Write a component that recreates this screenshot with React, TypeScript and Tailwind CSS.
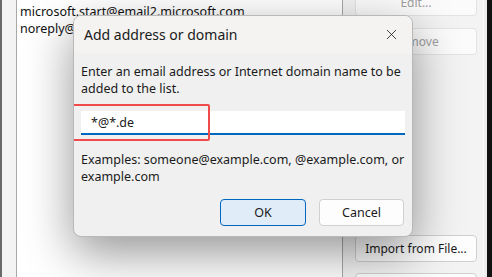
import { X } from 'lucide-react';

const font = { fontFamily: '"Noto Sans", "Liberation Sans", sans-serif' };

function SideButton({ label, disabled }: { label: string; disabled?: boolean }) {
  return (
    <div
      className={`flex h-[27px] shrink-0 items-center justify-center rounded-[4px] border text-[12px] ${
        disabled
          ? 'border-[#e3e3e3] bg-[#fbfbfb] text-[#a0a0a0]'
          : 'border-[#d0d0d0] bg-[#fdfdfd] text-[#1a1a1a]'
      }`}
    >
      {label}
    </div>
  );
}

export default function App() {
  return (
    <div
      className="relative h-[277px] w-[492px] overflow-hidden bg-[#f3f3f3]"
      style={font}
    >
      <div className="flex h-full">
        <div className="w-[16px] border-l-2 border-[#6a6a6a] bg-[#f3f3f3]" />
        <div className="w-[327px] border-x border-[#a8a8a8] bg-white px-[3px] pt-[3px] text-[12.5px] leading-[17px] text-[#111]">
          <div>microsoft.start@email2.microsoft.com</div>
          <div>noreply@microsoft.com</div>
        </div>
        <div className="ml-[12px] mt-[-11px] flex w-[122px] shrink-0 flex-col">
          <SideButton label="Edit..." disabled />
          <div className="h-[12px] shrink-0" />
          <SideButton label="Remove" disabled />
          <div className="h-[180px] shrink-0" />
          <SideButton label="Import from File..." />
          <div className="h-[11px] shrink-0" />
          <SideButton label="Export to File..." />
        </div>
        <div className="ml-[6px] w-[4px] border-l border-[#fafafa] bg-[#eeeeee]" />
        <div className="flex-1 bg-[#111]" />
      </div>

      <div className="absolute left-[73px] top-[15px] w-[340px] overflow-hidden rounded-[8px] border border-[#b8b8b8] bg-[#f0f0f0] shadow-[0_16px_48px_rgba(0,0,0,0.42)]">
        <div className="flex h-[37px] items-center justify-between bg-[#f5f3f1] pl-[10px] pr-[12px]">
          <span className="text-[14px] text-[#1a1a1a]">Add address or domain</span>
          <X size={17} strokeWidth={1.2} className="text-[#222]" />
        </div>
        <div className="px-[7px] pb-[10px] pt-[10px] text-[12.5px] leading-[17px] text-[#1a1a1a]">
          <p>Enter an email address or Internet domain name to be added to the list.</p>
          <div className="relative mt-[14px]">
            <div className="flex h-[24px] items-center border-b-2 border-[#0067c0] bg-white pl-[10px] text-[12.5px]">
              *@*.de
            </div>
            <div className="pointer-events-none absolute left-[-11px] top-[-7px] h-[37px] w-[140px] rounded-[2px] border-2 border-[#f04a4a]" />
          </div>
          <p className="mt-[16px]">
            Examples: someone@example.com, @example.com, or example.com
          </p>
          <div className="mt-[14px] flex justify-end gap-[13px] pr-[1px]">
            <div className="flex h-[27px] w-[86px] items-center justify-center rounded-[4px] border border-[#0067c0] bg-[#e0ecf8] text-[12.5px]">
              OK
            </div>
            <div className="flex h-[27px] w-[85px] items-center justify-center rounded-[4px] border border-[#d0d0d0] bg-[#fdfdfd] text-[12.5px]">
              Cancel
            </div>
          </div>
        </div>
      </div>
    </div>
  );
}
